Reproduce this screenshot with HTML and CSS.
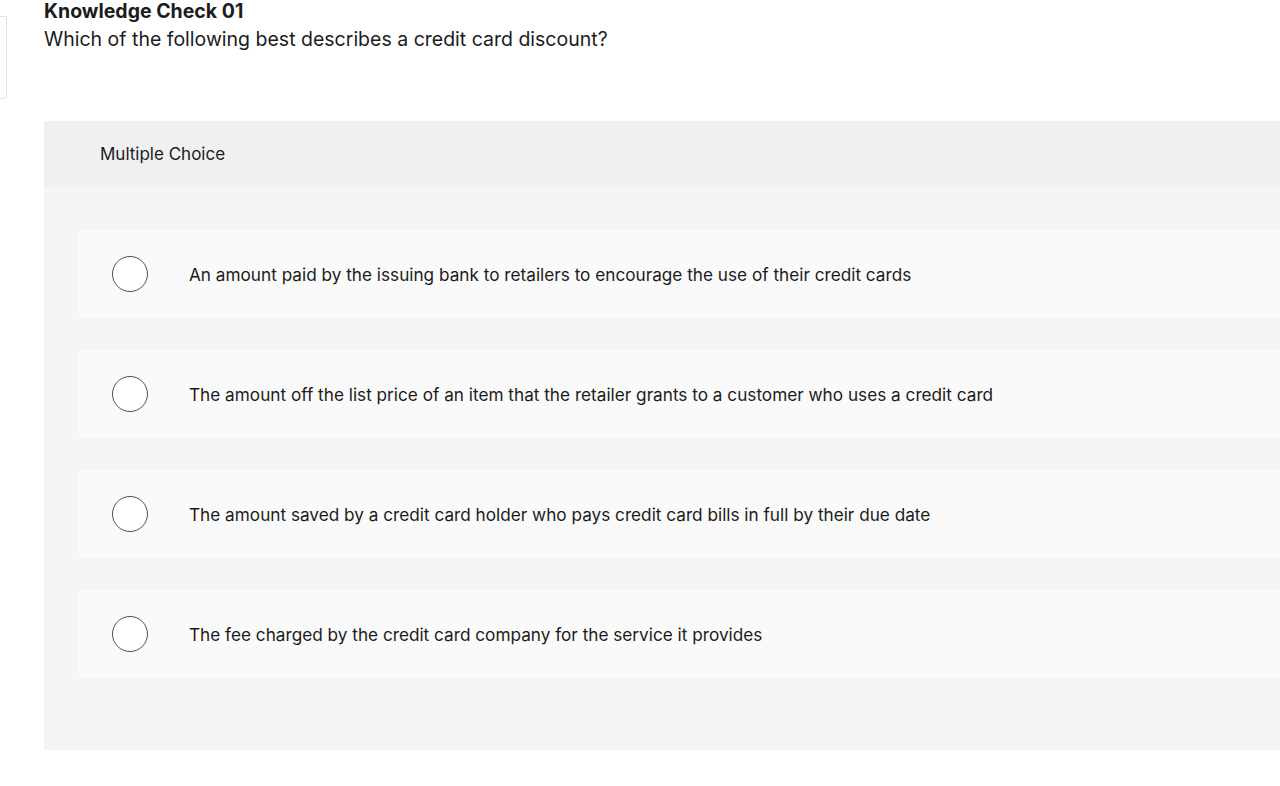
FILE: index.html
```html
<!DOCTYPE html>
<html>
<head>
<meta charset="utf-8">
<link rel="stylesheet" href="styles.css">
</head>
<body>
<div class="side-tab"></div>
<main class="page">
  <header class="question-head">
    <h1 class="title">Knowledge Check 01</h1>
    <p class="prompt">Which of the following best describes a credit card discount?</p>
  </header>
  <section class="panel">
    <div class="panel-head">Multiple Choice</div>
    <div class="panel-body">
      <label class="option"><span class="radio"></span><span class="option-text">An amount paid by the issuing bank to retailers to encourage the use of their credit cards</span></label>
      <label class="option"><span class="radio"></span><span class="option-text">The amount off the list price of an item that the retailer grants to a customer who uses a credit card</span></label>
      <label class="option"><span class="radio"></span><span class="option-text">The amount saved by a credit card holder who pays credit card bills in full by their due date</span></label>
      <label class="option"><span class="radio"></span><span class="option-text">The fee charged by the credit card company for the service it provides</span></label>
    </div>
  </section>
</main>
</body>
</html>
```
FILE: styles.css
```css
html, body {
  margin: 0;
  padding: 0;
  background: #ffffff;
  overflow: hidden;
}
body {
  font-family: Inter, "Open Sans", sans-serif;
  color: #1c1c1c;
  width: 1280px;
  height: 786px;
  position: relative;
}
.side-tab {
  position: absolute;
  left: -20px;
  top: 16px;
  width: 25px;
  height: 81px;
  border: 1px solid #e4e4e4;
  border-radius: 0 0 4px 0;
}
.page {
  padding-left: 44px;
}
.title {
  margin: 0;
  font-size: 19.5px;
  font-weight: 700;
  line-height: 22px;
  height: 22px;
}
.prompt {
  margin: 3px 0 0;
  font-size: 19.5px;
  line-height: 28px;
}
.panel {
  margin-top: 68px;
  background: #f5f5f5;
  height: 629px;
}
.panel-head {
  background: #f0f0f0;
  height: 66px;
  padding-left: 56px;
  display: flex;
  align-items: center;
  font-size: 17px;
}
.panel-body {
  padding: 43px 0 0 35px;
  display: flex;
  flex-direction: column;
  gap: 32px;
}
.option {
  display: flex;
  align-items: center;
  height: 88px;
  background: #fafafa;
  padding-left: 33px;
}
.radio {
  width: 34px;
  height: 34px;
  border: 1px solid #3e5466;
  border-radius: 50%;
  background: #ffffff;
  flex: none;
}
.option-text {
  margin-left: 41px;
  font-size: 17.2px;
}
```
